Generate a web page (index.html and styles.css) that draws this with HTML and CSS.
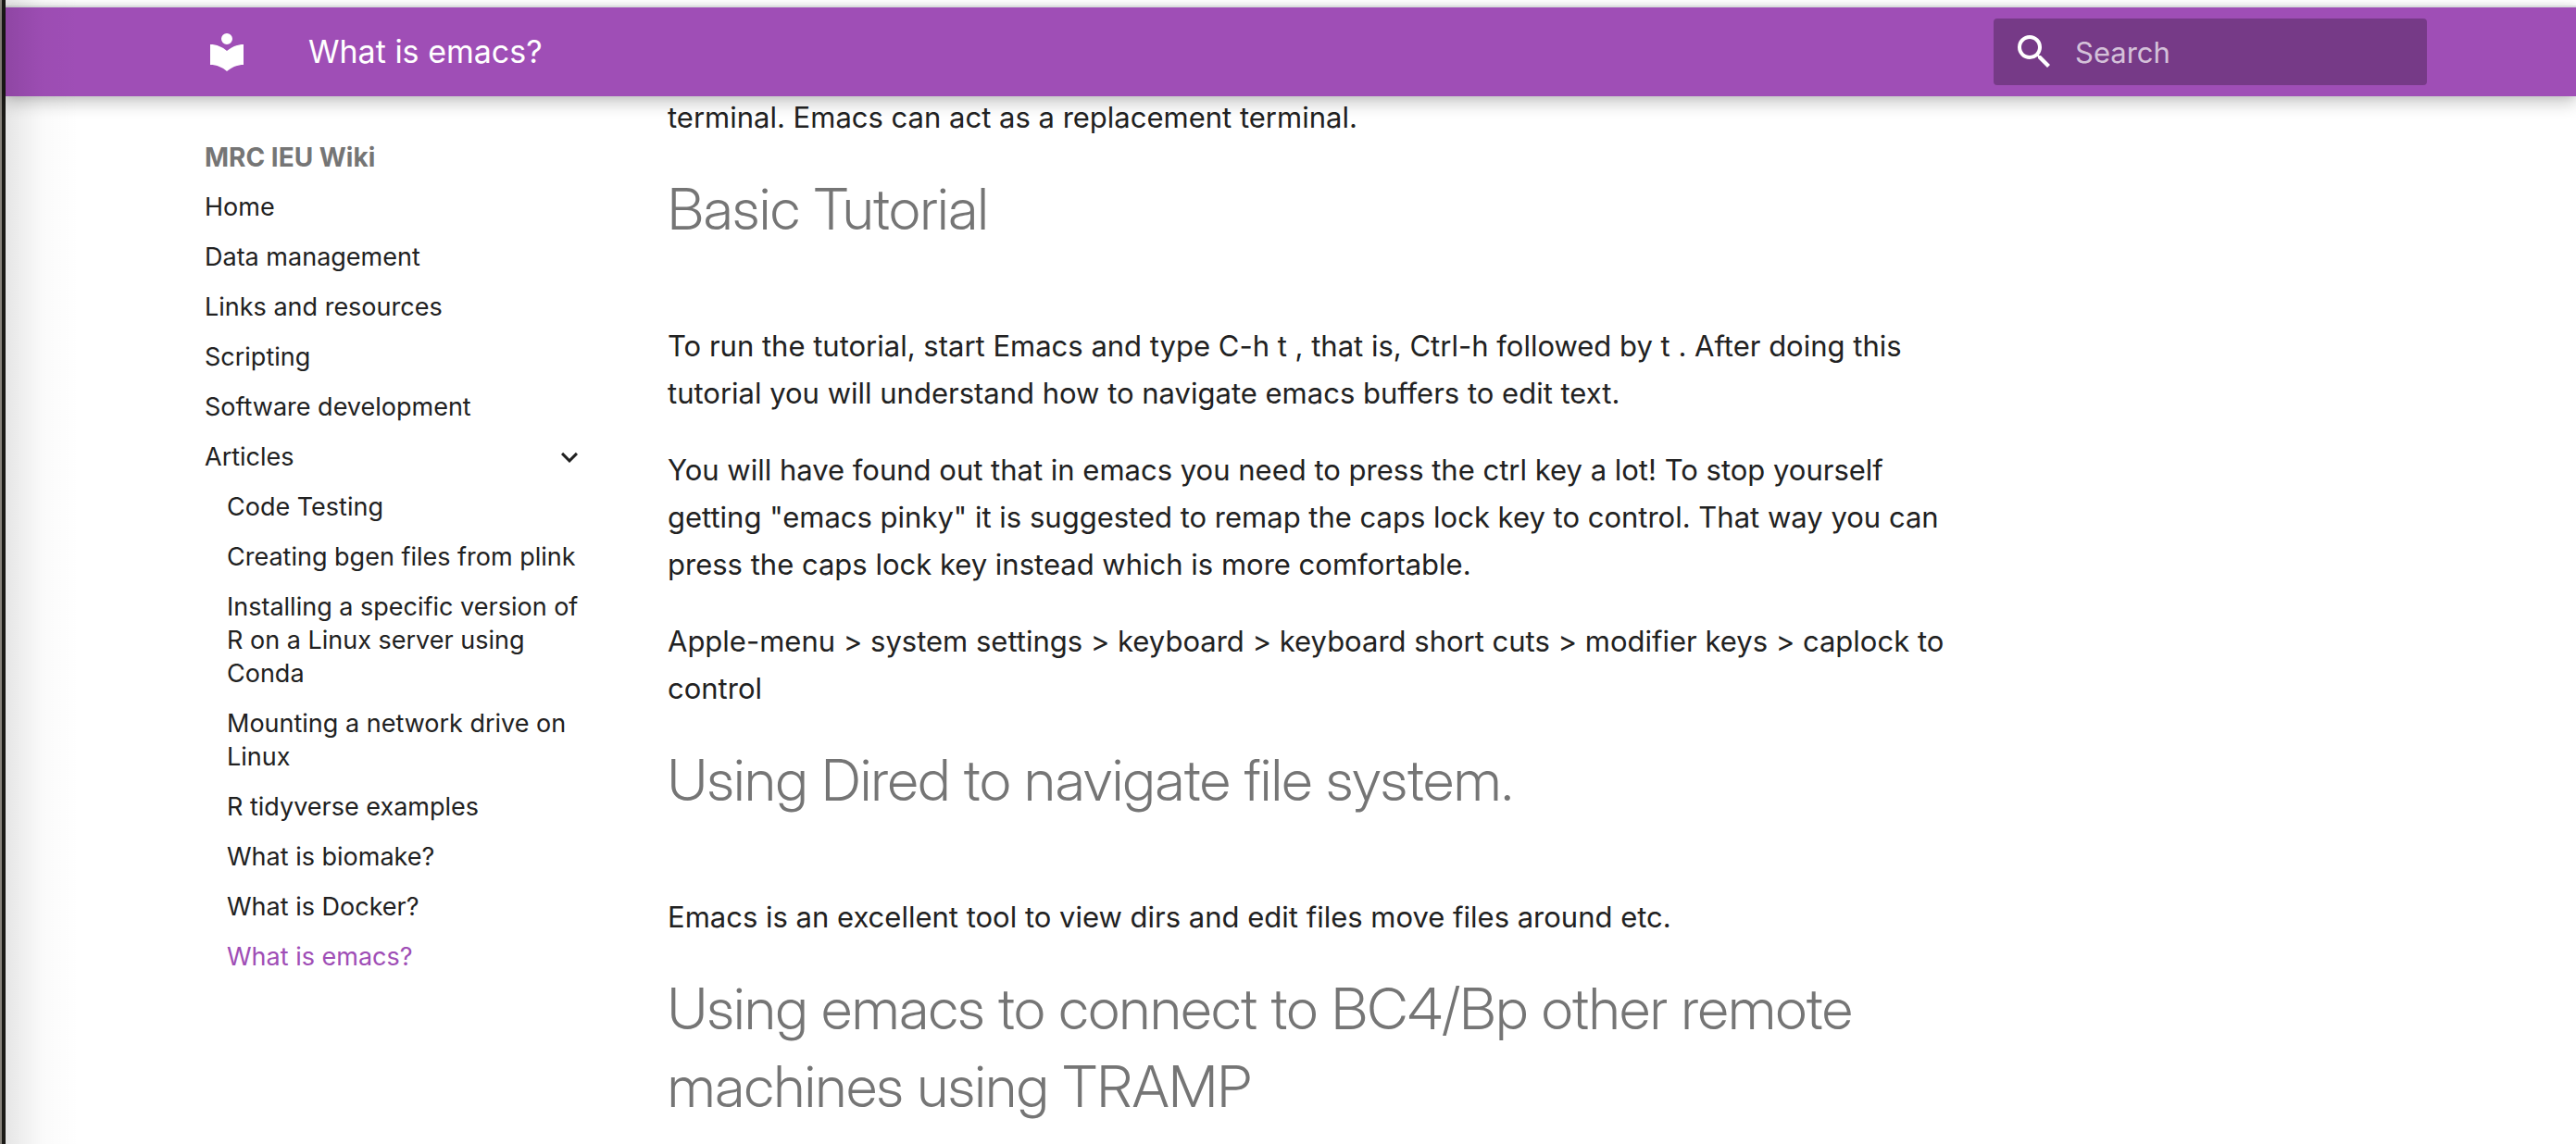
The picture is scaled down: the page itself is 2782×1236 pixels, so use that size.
FILE: index.html
```html
<!DOCTYPE html>
<html lang="en">
<head>
<meta charset="utf-8">
<meta name="viewport" content="width=device-width, initial-scale=1">
<title>What is emacs? - MRC IEU Wiki</title>
<link rel="stylesheet" href="styles.css">
</head>
<body>
<div class="page">
  <header class="header">
    <div class="grid header-inner">
      <a class="logo" href="#" aria-label="MRC IEU Wiki">
        <svg class="icon" viewBox="0 0 24 24" aria-hidden="true"><path d="M12 8a3 3 0 0 0 3-3 3 3 0 0 0-3-3 3 3 0 0 0-3 3 3 3 0 0 0 3 3m0 3.54C9.64 9.35 6.5 8 3 8v11c3.5 0 6.64 1.35 9 3.54 2.36-2.19 5.5-3.54 9-3.54V8c-3.5 0-6.64 1.35-9 3.54z"/></svg>
      </a>
      <span class="header-title">What is emacs?</span>
      <form class="search" role="search">
        <label class="search-label" for="query" aria-label="Search">
          <svg class="icon" viewBox="0 0 24 24" aria-hidden="true"><path d="M9.5 3A6.5 6.5 0 0 1 16 9.5c0 1.61-.59 3.09-1.56 4.23l.27.27h.79l5 5-1.5 1.5-5-5v-.79l-.27-.27A6.516 6.516 0 0 1 9.5 16 6.5 6.5 0 0 1 3 9.5 6.5 6.5 0 0 1 9.5 3m0 2C7 5 5 7 5 9.5S7 14 9.5 14 14 12 14 9.5 12 5 9.5 5z"/></svg>
        </label>
        <input class="search-input" id="query" type="text" placeholder="Search">
      </form>
    </div>
  </header>
  <div class="grid main">
    <nav class="nav" aria-label="MRC IEU Wiki">
      <span class="nav-title">MRC IEU Wiki</span>
      <ul class="nav-list">
        <li><a class="nav-link" href="#">Home</a></li>
        <li><a class="nav-link" href="#">Data management</a></li>
        <li><a class="nav-link" href="#">Links and resources</a></li>
        <li><a class="nav-link" href="#">Scripting</a></li>
        <li><a class="nav-link" href="#">Software development</a></li>
        <li>
          <button class="nav-toggle" type="button" aria-expanded="true">
            Articles
            <svg class="chevron" viewBox="0 0 24 24" aria-hidden="true"><path d="M7.41 8.58 12 13.17l4.59-4.59L18 10l-6 6-6-6z"/></svg>
          </button>
          <ul class="nav-list nav-sub">
            <li><a class="nav-link" href="#">Code Testing</a></li>
            <li><a class="nav-link" href="#">Creating bgen files from plink</a></li>
            <li><a class="nav-link" href="#">Installing a specific version of R on a Linux server using Conda</a></li>
            <li><a class="nav-link" href="#">Mounting a network drive on Linux</a></li>
            <li><a class="nav-link" href="#">R tidyverse examples</a></li>
            <li><a class="nav-link" href="#">What is biomake?</a></li>
            <li><a class="nav-link" href="#">What is Docker?</a></li>
            <li><a class="nav-link nav-active" href="#" aria-current="page">What is emacs?</a></li>
          </ul>
        </li>
      </ul>
    </nav>
    <main class="content">
      <p>terminal. Emacs can act as a replacement terminal.</p>
      <h1>Basic Tutorial</h1>
      <p>To run the tutorial, start Emacs and type C-h t , that is, Ctrl-h followed by t . After doing this tutorial you will understand how to navigate emacs buffers to edit text.</p>
      <p>You will have found out that in emacs you need to press the ctrl key a lot! To stop yourself getting "emacs pinky" it is suggested to remap the caps lock key to control. That way you can press the caps lock key instead which is more comfortable.</p>
      <p>Apple-menu &gt; system settings &gt; keyboard &gt; keyboard short cuts &gt; modifier keys &gt; caplock to control</p>
      <h1>Using Dired to navigate file system.</h1>
      <p>Emacs is an excellent tool to view dirs and edit files move files around etc.</p>
      <h1>Using emacs to connect to BC4/Bp other remote machines using TRAMP</h1>
    </main>
  </div>
</div>
</body>
</html>
```

FILE: styles.css
```css
* {
  box-sizing: border-box;
}

body {
  margin: 0;
  background: #fff;
  color: #212121;
  font-family: Inter, "Liberation Sans", sans-serif;
}

/* Desktop showing beside the window edge */
.page {
  position: relative;
  min-height: 100vh;
  border-left: 4px solid #1b1a17;
  padding-top: 6px;
  margin-left: 2px;
  box-shadow: -2px 0 #87827b;
}

/* Soft shade along the window edge */
.page::after {
  content: "";
  position: absolute;
  inset: 0 auto 0 0;
  width: 80px;
  z-index: 3;
  pointer-events: none;
  background: linear-gradient(to right, rgba(0, 0, 0, .1), rgba(0, 0, 0, .06) 25%, rgba(0, 0, 0, .02) 50%, transparent);
}

.grid {
  display: flex;
  max-width: 2776px;
  padding: 0 161px 0 215px;
}

.header {
  position: sticky;
  top: 0;
  z-index: 2;
  border-top: 2px solid #d9dcdd;
  background: #9f4eb6;
  color: #fff;
  box-shadow: 0 0 8px rgba(0, 0, 0, .1), 0 8px 16px rgba(0, 0, 0, .2);
}

.header-inner {
  align-items: center;
  height: 96px;
}

.logo {
  display: flex;
  color: inherit;
}

.icon {
  display: block;
  width: 48px;
  height: 48px;
  fill: currentColor;
}

.header-title {
  flex: 1;
  margin-left: 64px;
  font-size: 34px;
  line-height: 48px;
}

.search {
  display: flex;
  align-items: center;
  width: 468px;
  height: 72px;
  padding-left: 20px;
  border-radius: 4px;
  background: #763a87;
}

.search-label {
  flex: none;
}

.search-input {
  flex: 1;
  min-width: 0;
  height: 72px;
  padding: 0 20px;
  border: 0;
  outline: 0;
  background: transparent;
  color: #fff;
  font: inherit;
  font-size: 31px;
}

.search-input::placeholder {
  color: rgba(255, 255, 255, .7);
  opacity: 1;
}

.main {
  align-items: flex-start;
}

.nav {
  flex: none;
  width: 412px;
  margin-right: 88px;
  padding-top: 48px;
  font-size: 27px;
  line-height: 36px;
}

.nav-title {
  display: block;
  color: #757575;
  font-size: 28px;
  font-weight: 700;
}

.nav-list {
  margin: 0;
  padding: 0;
  list-style: none;
}

.nav-sub {
  padding-left: 24px;
}

.nav-link,
.nav-toggle {
  display: block;
  margin-top: 18px;
  color: inherit;
  text-decoration: none;
}

.nav-toggle {
  display: flex;
  justify-content: space-between;
  align-items: center;
  width: 100%;
  padding: 0;
  border: 0;
  background: none;
  font: inherit;
}

.nav-active {
  color: #9f4eb6;
}

.chevron {
  width: 36px;
  height: 36px;
  fill: currentColor;
}

/* The scrolled text runs just under the header */
.content {
  flex: 1;
  min-width: 0;
  max-width: 1392px;
  margin-top: -3px;
  font-size: 31px;
  line-height: 51px;
}

.content p {
  margin: 0 0 32px;
}

.content h1 {
  margin: 0 0 80px;
  color: #757575;
  font-family: "Inter Display", Inter, "Liberation Sans", sans-serif;
  font-size: 62px;
  font-weight: 300;
  line-height: 84px;
}

.content h1:last-child {
  margin-bottom: 0;
}
```
